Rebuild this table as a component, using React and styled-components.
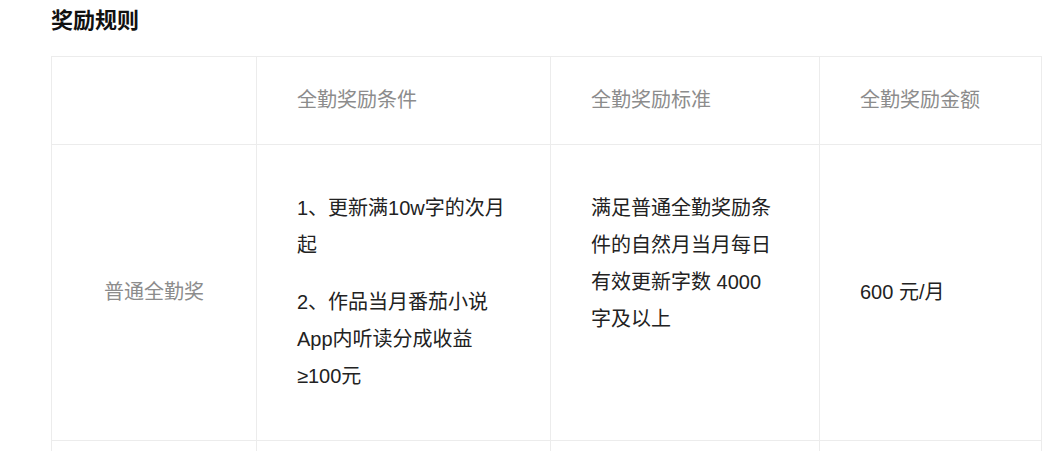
import styled, { createGlobalStyle } from "styled-components";

const GlobalStyle = createGlobalStyle`
  body {
    margin: 0;
    background: #fff;
    font-family: "Liberation Sans", "Noto Sans CJK SC", sans-serif;
  }
`;

const Page = styled.div`
  padding: 5px 0 0 51px;
  width: 989px;
`;

const Title = styled.h2`
  margin: 0 0 19px;
  font-size: 22px;
  line-height: 32px;
  font-weight: 700;
  color: #111;
`;

const Table = styled.table`
  width: 990px;
  border-collapse: collapse;
  table-layout: fixed;
`;

const Head = styled.th`
  border: 1px solid #ececec;
  padding: 25px 40px;
  font-size: 20px;
  line-height: 37px;
  font-weight: 400;
  color: #8c8c8c;
  text-align: left;
`;

const Cell = styled.td`
  border: 1px solid #ececec;
  padding: 25px 40px;
  font-size: 20px;
  line-height: 37px;
  color: ${(p) => (p.$muted ? "#8c8c8c" : "#222")};
  text-align: ${(p) => (p.$center ? "center" : "left")};
  vertical-align: ${(p) => (p.$top ? "top" : "middle")};
`;

const Para = styled.p`
  margin: 20px 0;
`;

const rows = [
  {
    name: "普通全勤奖",
    cond: ["1、更新满10w字的次月起", "2、作品当月番茄小说App内听读分成收益≥100元"],
    std: "满足普通全勤奖励条件的自然月当月每日有效更新字数 4000 字及以上",
    amount: "600 元/月",
  },
  {
    name: "勤奋全勤奖",
    cond: ["1、满足普通全勤奖励条件", "2、作品当月番茄小说App内听读分成收益≥300元"],
    std: "满足勤奋全勤奖励条件的自然月当月每日有效更新字数 6000 字及以上",
    amount: "1000 元/月",
  },
];

export default function App() {
  return (
    <>
      <GlobalStyle />
      <Page>
        <Title>奖励规则</Title>
        <Table>
          <colgroup>
            <col style={{ width: 205 }} />
            <col style={{ width: 294 }} />
            <col style={{ width: 269 }} />
            <col style={{ width: 222 }} />
          </colgroup>
          <thead>
            <tr>
              <Head></Head>
              <Head>全勤奖励条件</Head>
              <Head>全勤奖励标准</Head>
              <Head>全勤奖励金额</Head>
            </tr>
          </thead>
          <tbody>
            {rows.map((r) => (
              <tr key={r.name}>
                <Cell $muted $center>
                  {r.name}
                </Cell>
                <Cell $top>
                  {r.cond.map((c) => (
                    <Para key={c}>{c}</Para>
                  ))}
                </Cell>
                <Cell $top>
                  <Para>{r.std}</Para>
                </Cell>
                <Cell>{r.amount}</Cell>
              </tr>
            ))}
          </tbody>
        </Table>
      </Page>
    </>
  );
}
